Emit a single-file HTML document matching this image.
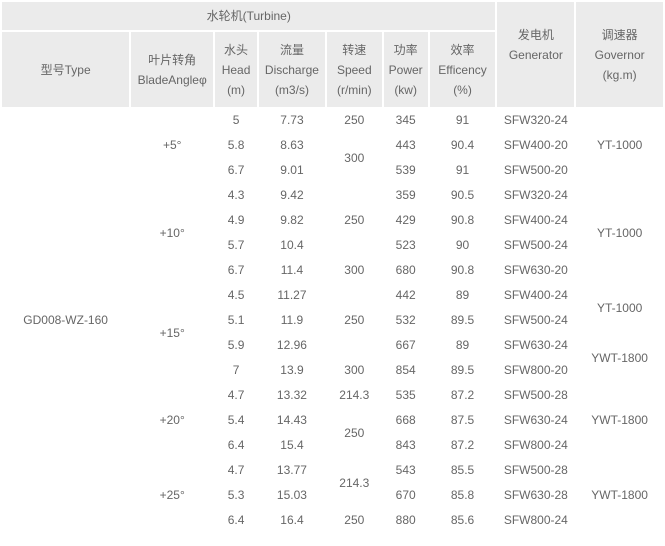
<!DOCTYPE html>
<html><head><meta charset="utf-8"><style>
html,body{margin:0;padding:0;background:#fff;width:665px;height:546px;overflow:hidden}
table{position:absolute;left:0;top:0;border-collapse:separate;border-spacing:2px;table-layout:fixed;font-family:"Liberation Sans","Noto Sans CJK SC",sans-serif;font-size:12px;color:#666;}
td{padding:0;text-align:center;vertical-align:middle;line-height:20px}
thead td{background:#ebebeb}
tbody td{height:23px;line-height:23px;background:#fff}
</style></head><body>
<table>
<colgroup><col style="width:128px"><col style="width:82px"><col style="width:42px"><col style="width:66px"><col style="width:55px"><col style="width:44px"><col style="width:66px"><col style="width:77px"><col style="width:87px"></colgroup>
<thead>
<tr><td colspan="7" style="height:28px">水轮机(Turbine)</td><td rowspan="2">发电机<br>Generator<br>&nbsp;</td><td rowspan="2">调速器<br>Governor<br>(kg.m)</td></tr>
<tr><td style="height:75px">型号Type</td><td>叶片转角<br>BladeAngleφ</td><td>水头<br>Head<br>(m)</td><td>流量<br>Discharge<br>(m3/s)</td><td>转速<br>Speed<br>(r/min)</td><td>功率<br>Power<br>(kw)</td><td>效率<br>Efficency<br>(%)</td></tr>
</thead>
<tbody>
<tr><td rowspan="17">GD008-WZ-160</td><td rowspan="3">+5°</td><td>5</td><td>7.73</td><td>250</td><td>345</td><td>91</td><td>SFW320-24</td><td rowspan="3">YT-1000</td></tr>
<tr><td>5.8</td><td>8.63</td><td rowspan="2">300</td><td>443</td><td>90.4</td><td>SFW400-20</td></tr>
<tr><td>6.7</td><td>9.01</td><td>539</td><td>91</td><td>SFW500-20</td></tr>
<tr><td rowspan="4">+10°</td><td>4.3</td><td>9.42</td><td rowspan="3">250</td><td>359</td><td>90.5</td><td>SFW320-24</td><td rowspan="4">YT-1000</td></tr>
<tr><td>4.9</td><td>9.82</td><td>429</td><td>90.8</td><td>SFW400-24</td></tr>
<tr><td>5.7</td><td>10.4</td><td>523</td><td>90</td><td>SFW500-24</td></tr>
<tr><td>6.7</td><td>11.4</td><td>300</td><td>680</td><td>90.8</td><td>SFW630-20</td></tr>
<tr><td rowspan="4">+15°</td><td>4.5</td><td>11.27</td><td rowspan="3">250</td><td>442</td><td>89</td><td>SFW400-24</td><td rowspan="2">YT-1000</td></tr>
<tr><td>5.1</td><td>11.9</td><td>532</td><td>89.5</td><td>SFW500-24</td></tr>
<tr><td>5.9</td><td>12.96</td><td>667</td><td>89</td><td>SFW630-24</td><td rowspan="2">YWT-1800</td></tr>
<tr><td>7</td><td>13.9</td><td>300</td><td>854</td><td>89.5</td><td>SFW800-20</td></tr>
<tr><td rowspan="3">+20°</td><td>4.7</td><td>13.32</td><td>214.3</td><td>535</td><td>87.2</td><td>SFW500-28</td><td rowspan="3">YWT-1800</td></tr>
<tr><td>5.4</td><td>14.43</td><td rowspan="2">250</td><td>668</td><td>87.5</td><td>SFW630-24</td></tr>
<tr><td>6.4</td><td>15.4</td><td>843</td><td>87.2</td><td>SFW800-24</td></tr>
<tr><td rowspan="3">+25°</td><td>4.7</td><td>13.77</td><td rowspan="2">214.3</td><td>543</td><td>85.5</td><td>SFW500-28</td><td rowspan="3">YWT-1800</td></tr>
<tr><td>5.3</td><td>15.03</td><td>670</td><td>85.8</td><td>SFW630-28</td></tr>
<tr><td>6.4</td><td>16.4</td><td>250</td><td>880</td><td>85.6</td><td>SFW800-24</td></tr>
</tbody>
</table>
</body></html>
